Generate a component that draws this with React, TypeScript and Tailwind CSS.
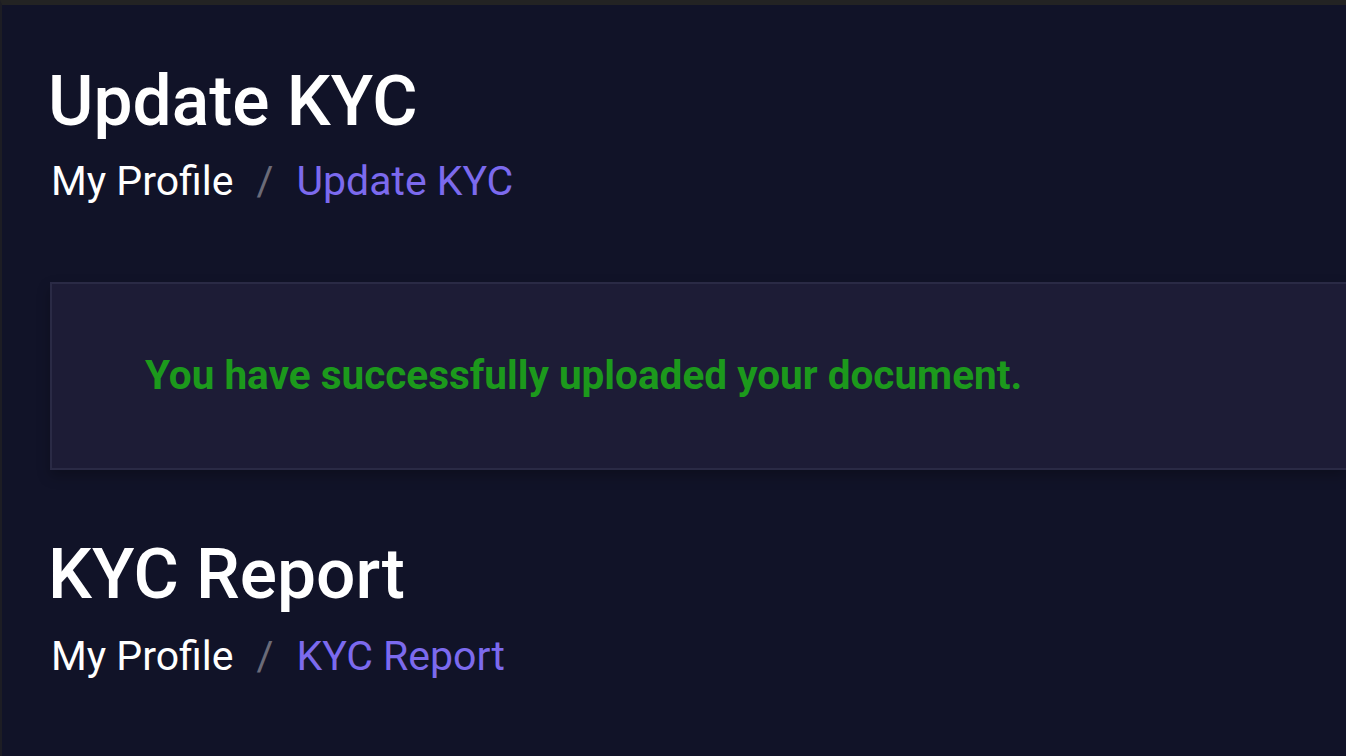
export default function App() {
  return (
    <div className="min-h-screen w-full bg-[#111328] border-t-[5px] border-l-2 border-t-[#232323] border-l-[#1d1d24] font-['Roboto',sans-serif] overflow-hidden">
      <section className="pl-[46px] pt-[55px]">
        <h1 className="text-[69.5px] leading-[1.2] font-medium text-white">Update KYC</h1>
        <nav className="mt-[14px] pl-[3px] flex items-center text-[41px] leading-[1.2]">
          <span className="text-white">My Profile</span>
          <span className="mx-[23px] text-[#6b6b78]">/</span>
          <span className="text-[#7c6aee]">Update KYC</span>
        </nav>
      </section>

      <div className="mt-[75px] ml-[48px] h-[188px] flex items-center bg-[#1d1c36] border-2 border-r-0 border-[#2a2a45] pl-[93px] shadow-[0_6px_12px_rgba(0,0,0,0.25)]">
        <p className="text-[40.5px] font-bold text-[#1c991c]">You have successfully uploaded your document.</p>
      </div>

      <section className="pl-[46px] mt-[63px]">
        <h1 className="text-[69.5px] leading-[1.2] font-medium text-white">KYC Report</h1>
        <nav className="mt-[16px] pl-[3px] flex items-center text-[41px] leading-[1.2]">
          <span className="text-white">My Profile</span>
          <span className="mx-[23px] text-[#6b6b78]">/</span>
          <span className="text-[#7c6aee]">KYC Report</span>
        </nav>
      </section>
    </div>
  );
}
